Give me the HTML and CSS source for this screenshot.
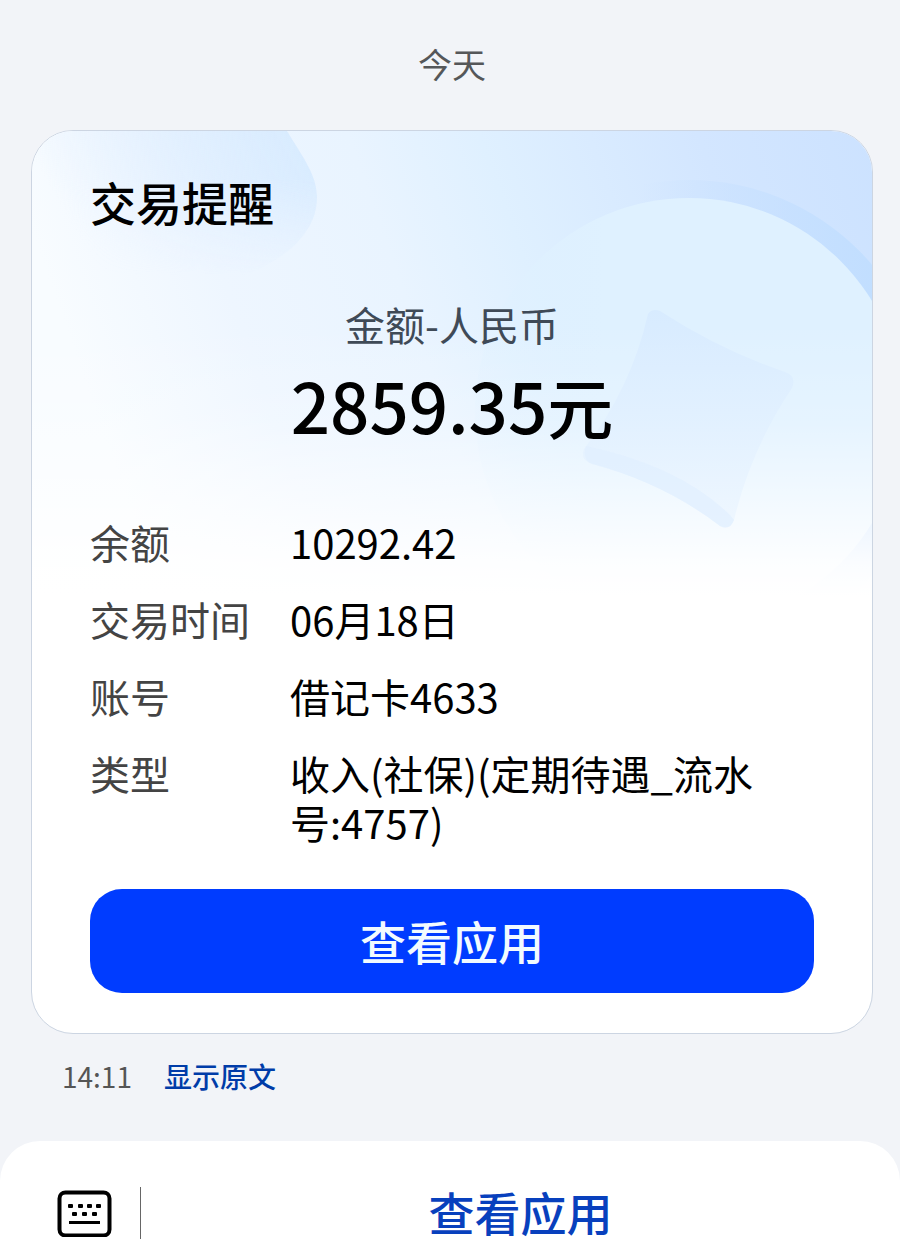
FILE: index.html
```html
<!DOCTYPE html>
<html lang="zh-CN">
<head>
    <meta charset="UTF-8">
    <meta name="viewport" content="width=device-width, initial-scale=1.0">
    <title>交易提醒</title>

    <link rel="stylesheet" href="styles.css">
</head>
<body>

    <main class="chat">
        <p class="day">今天</p>

        <article class="card">
            <svg class="card-art" viewBox="0 0 842 480" preserveAspectRatio="xMaxYMin slice" aria-hidden="true">
                <defs>
                    <linearGradient id="base" x1="0" y1="0.2" x2="1" y2="0">
                        <stop offset="0" stop-color="#f8fcff"/>
                        <stop offset="0.2" stop-color="#eef6ff"/>
                        <stop offset="0.4" stop-color="#e9f4ff"/>
                        <stop offset="0.55" stop-color="#dff0ff"/>
                        <stop offset="0.8" stop-color="#d3e6ff"/>
                        <stop offset="1" stop-color="#cce2ff"/>
                    </linearGradient>
                    <linearGradient id="blob" x1="0" y1="0.5" x2="1" y2="0.2">
                        <stop offset="0.1" stop-color="#d9ebff" stop-opacity="0"/>
                        <stop offset="1" stop-color="#d8ebff"/>
                    </linearGradient>
                    <linearGradient id="blobFade" x1="0" y1="0" x2="0" y2="1">
                        <stop offset="0.3" stop-color="#fff"/>
                        <stop offset="0.9" stop-color="#000"/>
                    </linearGradient>
                    <mask id="blobMask">
                        <rect width="300" height="160" fill="url(#blobFade)"/>
                    </mask>
                    <linearGradient id="ring" x1="0.4" y1="0" x2="0.9" y2="0">
                        <stop offset="0" stop-color="#c4dfff" stop-opacity="0"/>
                        <stop offset="1" stop-color="#c1deff"/>
                    </linearGradient>
                    <linearGradient id="disc" x1="0" y1="0" x2="1" y2="0">
                        <stop offset="0" stop-color="#dff1ff" stop-opacity="0.3"/>
                        <stop offset="0.3" stop-color="#dff1ff"/>
                    </linearGradient>
                    <linearGradient id="fade" x1="0" y1="0" x2="0" y2="1">
                        <stop offset="0.4" stop-color="#fff" stop-opacity="0"/>
                        <stop offset="0.6" stop-color="#fff" stop-opacity="0.2"/>
                        <stop offset="0.8" stop-color="#fff" stop-opacity="0.68"/>
                        <stop offset="0.9" stop-color="#fff" stop-opacity="0.92"/>
                        <stop offset="0.97" stop-color="#fff"/>
                    </linearGradient>
                    <linearGradient id="gem" x1="0" y1="0" x2="0" y2="1">
                        <stop offset="0" stop-color="#d5e9ff"/>
                        <stop offset="1" stop-color="#ebf5ff"/>
                    </linearGradient>
                </defs>
                <rect width="842" height="480" fill="url(#base)"/>
                <path d="M0 0H257C270 22 287 43 287 66C287 104 252 132 200 150H0Z" fill="url(#blob)" mask="url(#blobMask)"/>
                <circle cx="659" cy="289" r="240" fill="url(#ring)"/>
                <circle cx="659" cy="281" r="214" fill="url(#disc)"/>
                <rect width="842" height="480" fill="url(#fade)"/>
                <path d="M618 183Q622 177 630 180Q690 219 755 241Q767 245 762 257Q721 318 704 389Q700 400 690 395Q634 352 560 332Q550 328 554 318Q601 258 618 183Z" fill="url(#gem)" opacity="0.7"/>
                <path d="M556 315Q552 329 562 333Q634 352 690 395Q700 400 704 389L700 384Q650 335 556 315Z" fill="#dfefff" opacity="0.6"/>
            </svg>

            <div class="card-body">
                <h1 class="title">交易提醒</h1>

                <div class="amount">
                    <p class="amount-label">金额-人民币</p>
                    <p class="amount-value">2859.35<span class="unit">元</span></p>
                </div>

                <dl class="details">
                    <dt>余额</dt>
                    <dd>10292.42</dd>
                    <dt>交易时间</dt>
                    <dd>06月18日</dd>
                    <dt>账号</dt>
                    <dd>借记卡4633</dd>
                    <dt>类型</dt>
                    <dd>收入(社保)(定期待遇_流水号:4757)</dd>
                </dl>

                <button type="button" class="open-button">查看应用</button>
            </div>
        </article>

        <div class="meta">
            <time datetime="14:11">14:11</time>
            <a href="#" class="original">显示原文</a>
        </div>
    </main>

    <footer class="bottom-bar">
        <button type="button" class="keyboard-button" aria-label="键盘">
            <svg width="56" height="48" viewBox="0 0 56 48" aria-hidden="true">
                <rect x="3.5" y="3.5" width="50" height="43" rx="6" fill="none" stroke="#000" stroke-width="4"/>
                <g fill="#000">
                    <rect x="12" y="15" width="5" height="4" rx="1"/>
                    <rect x="22" y="15" width="5" height="4" rx="1"/>
                    <rect x="31" y="15" width="5" height="4" rx="1"/>
                    <rect x="40" y="15" width="5" height="4" rx="1"/>
                    <rect x="16" y="23" width="5" height="4" rx="1"/>
                    <rect x="26" y="23" width="5" height="4" rx="1"/>
                    <rect x="36" y="23" width="5" height="4" rx="1"/>
                    <rect x="13" y="32" width="31" height="3"/>
                </g>
            </svg>
        </button>
        <button type="button" class="menu-button">查看应用</button>
    </footer>

</body>
</html>
```
FILE: styles.css
```css
* {
    margin: 0;
    padding: 0;
    box-sizing: border-box;
}

body {
    min-height: 100vh;
    display: flex;
    flex-direction: column;
    background-color: #f2f4f8;
    color: #000;
    font-family: "Noto Sans CJK SC", sans-serif;
}

button {
    font-family: inherit;
    border: none;
    background: none;
    cursor: pointer;
}

.chat {
    flex: 1;
    padding: 40px 27px 36px 31px;
}

.day {
    margin-bottom: 42px;
    text-align: center;
    font-size: 34px;
    line-height: 48px;
    color: #555759;
}

.card {
    position: relative;
    overflow: hidden;
    border: 1px solid #ccd5e2;
    border-radius: 42px;
    background-color: #fff;
}

.card-art {
    position: absolute;
    top: 0;
    left: 0;
    width: 100%;
    height: 480px;
}

.card-body {
    position: relative;
    padding: 43px 58px 40px;
}

.title {
    font-size: 46px;
    line-height: 54px;
    font-weight: 500;
}

.amount {
    margin-top: 72px;
    text-align: center;
}

.amount-label {
    font-size: 40px;
    line-height: 48px;
    color: #3f4a57;
}

.amount-value {
    margin-top: 16px;
    font-size: 69px;
    line-height: 80px;
    font-weight: 500;
}

.unit {
    font-size: 66px;
}

.details {
    display: grid;
    grid-template-columns: 172px 1fr;
    gap: 28px;
    margin: 73px 0 42px;
    font-size: 40px;
    line-height: 49px;
}

.details dt {
    color: #444;
}

.open-button {
    display: block;
    width: 100%;
    height: 104px;
    padding-bottom: 2px;
    border-radius: 32px;
    background-color: #003cff;
    color: #f2fbff;
    font-size: 46px;
    font-weight: 500;
}

.meta {
    display: flex;
    align-items: center;
    gap: 32px;
    padding: 22px 31px 0;
    font-size: 28px;
    line-height: 40px;
    color: #555;
}

.original {
    color: #003ca8;
    font-weight: 500;
    text-decoration: none;
}

.bottom-bar {
    display: flex;
    padding-top: 46px;
    border-radius: 40px 40px 0 0;
    background-color: #fff;
}

.keyboard-button {
    display: flex;
    align-items: center;
    padding: 0 28px 0 56px;
    border-right: 1px solid #666;
}

.menu-button {
    flex: 1;
    height: 52px;
    padding-bottom: 4px;
    color: #0840bd;
    font-size: 46px;
    line-height: 48px;
    font-weight: 500;
}
```
